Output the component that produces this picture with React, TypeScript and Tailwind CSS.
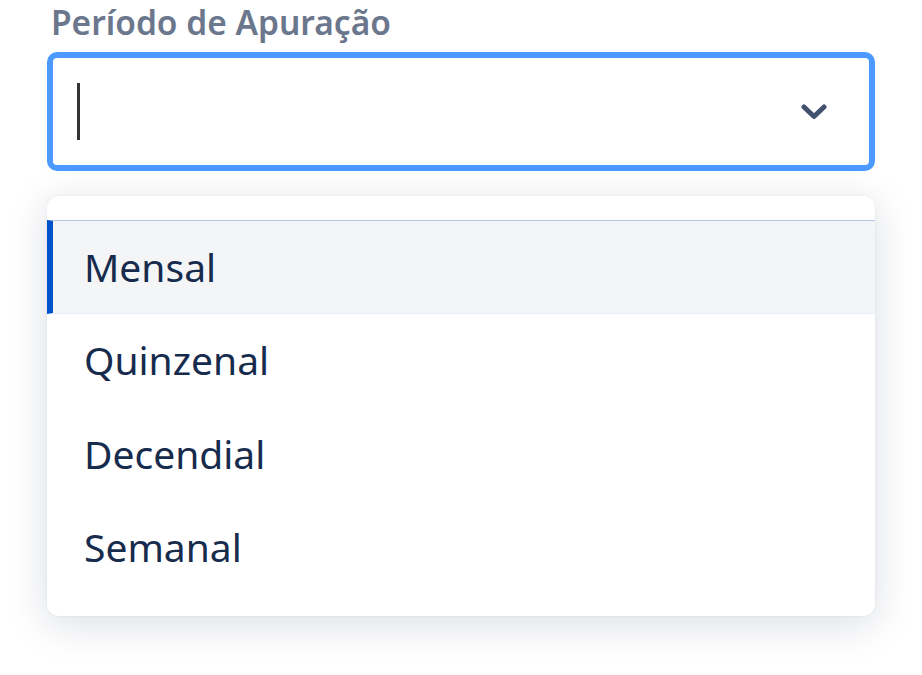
import { useState } from "react";

const options = ["Mensal", "Quinzenal", "Decendial", "Semanal"];

function Chevron() {
  return (
    <svg width="26" height="18" viewBox="0 0 26 18" fill="none">
      <path
        d="M3 4 L13 13.5 L23 4"
        stroke="#42526e"
        strokeWidth="5"
        strokeLinecap="round"
        strokeLinejoin="round"
      />
    </svg>
  );
}

export default function App() {
  const [active] = useState(0);

  return (
    <div
      className="min-h-screen bg-white px-[47px]"
      style={{ fontFamily: '"Noto Sans", "Open Sans", sans-serif' }}
    >
      <div className="pl-[4px] text-[33.5px] font-semibold leading-[44px] text-[#6b778c]">
        Período de Apuração
      </div>
      <div className="mt-[8px] flex h-[119px] items-center rounded-[10px] border-[6px] border-[#4c9aff] bg-white pl-[24px] pr-[42px]">
        <div className="h-[57px] w-[3px] bg-[#333333]" />
        <div className="flex-1" />
        <Chevron />
      </div>
      <div className="mt-[25px] rounded-[12px] bg-white pb-[22px] pt-[24px] shadow-[0_8px_40px_rgba(9,30,66,0.15),0_0_3px_rgba(9,30,66,0.06)]">
        {options.map((o, i) => (
          <div
            key={o}
            className={`flex h-[93.5px] items-center pl-[37px] text-[39px] text-[#172b4d] ${
              i === active
                ? "border-l-[6px] border-t border-b border-l-[#0052cc] border-t-[#b3c7e8] border-b-[#e6eeff] bg-[#f4f5f7] !pl-[31px]"
                : ""
            }`}
          >
            {o}
          </div>
        ))}
      </div>
    </div>
  );
}
